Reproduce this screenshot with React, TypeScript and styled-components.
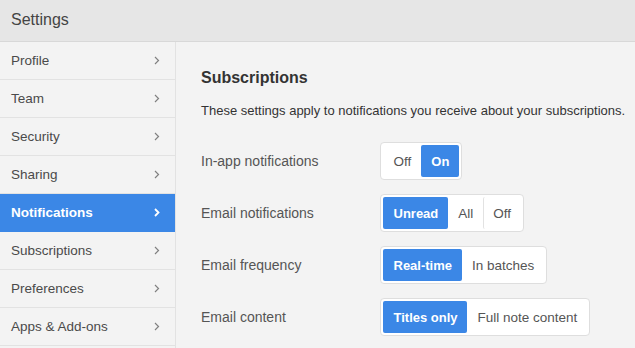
import React from "react";
import styled, { createGlobalStyle } from "styled-components";

const Global = createGlobalStyle`
  html, body { margin: 0; padding: 0; background: #f3f3f3; }
  body { font-family: "Liberation Sans", Arial, sans-serif; }
  * { box-sizing: border-box; }
`;

const Page = styled.div`
  width: 635px;
  height: 348px;
  overflow: hidden;
  display: flex;
  flex-direction: column;
  background: #f3f3f3;
`;

const Header = styled.div`
  height: 42px;
  flex: none;
  background: #e6e6e6;
  border-bottom: 1px solid #d8d8d8;
  display: flex;
  align-items: center;
  padding: 0 11px 1px;
  font-size: 16px;
  color: #444;
`;

const Body = styled.div`
  flex: 1;
  display: flex;
  min-height: 0;
`;

const Sidebar = styled.nav`
  width: 176px;
  flex: none;
  background: #f3f3f3;
  border-right: 1px solid #e2e2e2;
  display: flex;
  flex-direction: column;
`;

const NavItem = styled.div<{ $active?: boolean }>`
  height: 38px;
  flex: none;
  display: flex;
  align-items: center;
  justify-content: space-between;
  padding: 0 15px 0 11px;
  border-bottom: 1px solid ${(p) => (p.$active ? "#3b87e6" : "#e2e2e2")};
  background: ${(p) => (p.$active ? "#3b87e6" : "transparent")};
  color: ${(p) => (p.$active ? "#fff" : "#4a4a4a")};
  font-size: 13.5px;
  font-weight: ${(p) => (p.$active ? 700 : 400)};
`;

const Main = styled.main`
  flex: 1;
  padding: 27px 0 0 25px;
  display: flex;
  flex-direction: column;
`;

const Title = styled.h2`
  margin: 0;
  font-size: 16px;
  line-height: 18px;
  font-weight: 700;
  color: #333;
`;

const Desc = styled.p`
  margin: 16px 0 0;
  font-size: 13px;
  line-height: 15px;
  color: #333;
  white-space: nowrap;
`;

const Rows = styled.div`
  margin-top: 24px;
  display: flex;
  flex-direction: column;
  gap: 14px;
`;

const Row = styled.div`
  display: flex;
  align-items: center;
`;

const Label = styled.div`
  width: 179px;
  font-size: 14px;
  color: #555;
`;

const Group = styled.div`
  display: inline-flex;
  height: 38px;
  padding: 2px;
  background: #fff;
  border: 1px solid #dedede;
  border-radius: 4px;
`;

const Option = styled.div<{ $active?: boolean; $divider?: boolean }>`
  height: 32px;
  display: flex;
  align-items: center;
  padding: 0 9.5px;
  font-size: ${(p) => (p.$active ? "13px" : "13.5px")};
  border-radius: 2px;
  background: ${(p) => (p.$active ? "#3b87e6" : "#fff")};
  color: ${(p) => (p.$active ? "#fff" : "#555")};
  font-weight: ${(p) => (p.$active ? 700 : 400)};
  border-left: 1px solid ${(p) => (p.$divider ? "#e2e2e2" : "transparent")};
`;

const Chevron = ({ active }: { active?: boolean }) => (
  <svg width="6" height="9" viewBox="0 0 6 9">
    <polyline
      points="1,1 4.5,4.5 1,8"
      fill="none"
      stroke={active ? "#fff" : "#808080"}
      strokeWidth={active ? 1.8 : 1.2}
    />
  </svg>
);

const nav = [
  "Profile",
  "Team",
  "Security",
  "Sharing",
  "Notifications",
  "Subscriptions",
  "Preferences",
  "Apps & Add-ons",
];

const settings: { label: string; options: string[]; active: number }[] = [
  { label: "In-app notifications", options: ["Off", "On"], active: 1 },
  { label: "Email notifications", options: ["Unread", "All", "Off"], active: 0 },
  { label: "Email frequency", options: ["Real-time", "In batches"], active: 0 },
  { label: "Email content", options: ["Titles only", "Full note content"], active: 0 },
];

export default function App() {
  return (
    <Page>
      <Global />
      <Header>Settings</Header>
      <Body>
        <Sidebar>
          {nav.map((n) => (
            <NavItem key={n} $active={n === "Notifications"}>
              <span>{n}</span>
              <Chevron active={n === "Notifications"} />
            </NavItem>
          ))}
        </Sidebar>
        <Main>
          <Title>Subscriptions</Title>
          <Desc>These settings apply to notifications you receive about your subscriptions.</Desc>
          <Rows>
            {settings.map((s) => (
              <Row key={s.label}>
                <Label>{s.label}</Label>
                <Group>
                  {s.options.map((o, i) => (
                    <Option
                      key={o}
                      $active={i === s.active}
                      $divider={i > 0 && i !== s.active && i - 1 !== s.active}
                    >
                      {o}
                    </Option>
                  ))}
                </Group>
              </Row>
            ))}
          </Rows>
        </Main>
      </Body>
    </Page>
  );
}
